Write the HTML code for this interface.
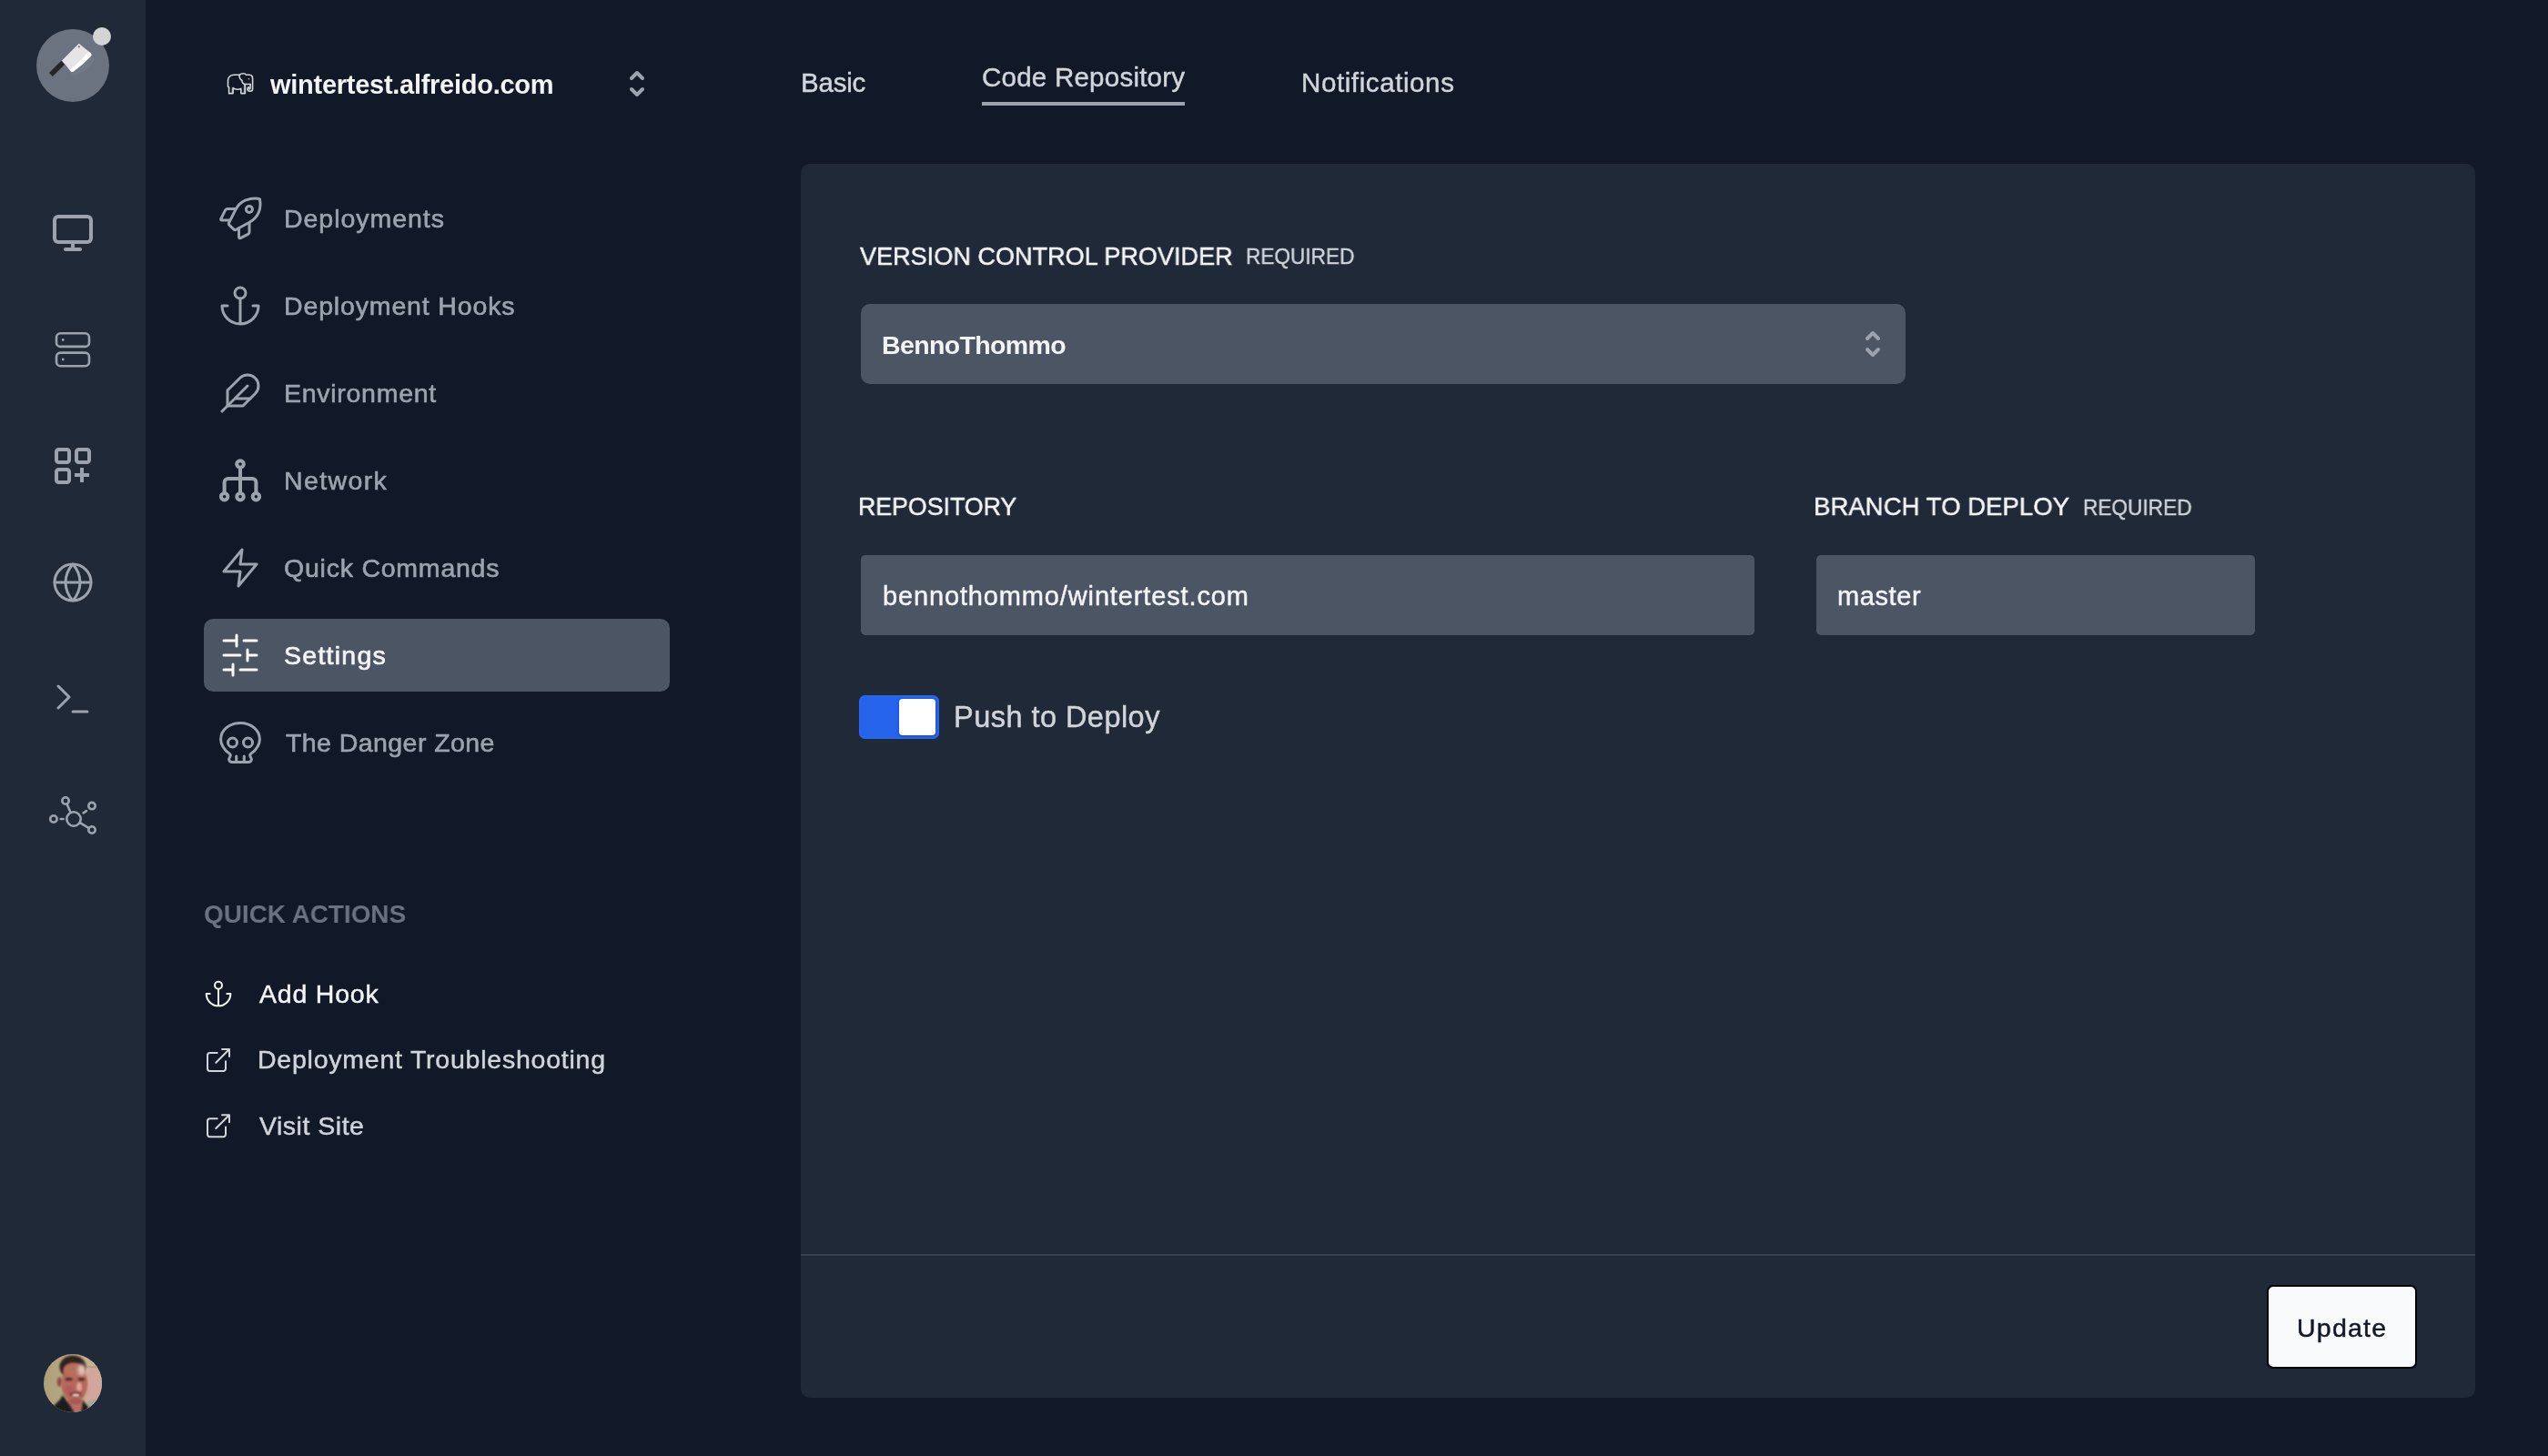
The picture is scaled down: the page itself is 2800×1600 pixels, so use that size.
<!DOCTYPE html>
<html lang="en">
<head>
<meta charset="utf-8">
<title>Settings - Code Repository</title>
<style>
  html, body { margin: 0; padding: 0; }
  body {
    width: 2800px; height: 1600px; overflow: hidden; position: relative;
    background: #111827;
    font-family: "Liberation Sans", sans-serif;
    color: #f3f4f6;
    -webkit-font-smoothing: antialiased;
  }
  .abs { position: absolute; }
  .t { position: absolute; white-space: nowrap; line-height: 1; margin: 0; padding: 0; will-change: transform; }
  #rail { left: 0; top: 0; width: 160px; height: 1600px; background: #1f2937; }
  #logo { left: 40px; top: 32px; width: 80px; height: 80px; border-radius: 50%; background: #6b7280; }
  #logodot { left: 102px; top: 30px; width: 20px; height: 20px; border-radius: 50%; background: #d4d4d4; }
  #navsel { left: 224px; top: 680px; width: 512px; height: 80px; border-radius: 10px; background: #4b5563; }
  #card { left: 880px; top: 180px; width: 1840px; height: 1356px; border-radius: 10px; background: #1f2937; }
  #divider { left: 880px; top: 1378px; width: 1840px; height: 2px; background: #374151; }
  #tabline { left: 1079px; top: 112px; width: 223px; height: 4px; background: #9ca3af; }
  .field { background: #4b5563; }
  #sel { left: 946px; top: 334px; width: 1148px; height: 88px; border-radius: 10px; }
  #repo { left: 946px; top: 610px; width: 982px; height: 88px; border-radius: 5px; }
  #branch { left: 1996px; top: 610px; width: 482px; height: 88px; border-radius: 5px; }
  #toggle { left: 944px; top: 764px; width: 88px; height: 48px; border-radius: 7px; background: #2563eb; box-shadow: inset 0 0 0 2px #2866ee; }
  #knob { left: 988px; top: 768px; width: 40px; height: 40px; border-radius: 4px; background: #ffffff; box-shadow: 0 1px 3px rgba(10,30,120,.45); }
  #btn { left: 2491px; top: 1412px; width: 161px; height: 88px; border-radius: 7px; background: #f9fafb; border: 2px solid #000; }
  .nav { font-size: 28px; color: #9ca3af; }
  .lab { font-size: 28px; color: #f3f4f6; }
  .req { font-size: 24px; color: #d1d5db; }
  .qa  { font-size: 28px; color: #d1d5db; }
  .tab { font-size: 30px; color: #d1d5db; }
</style>
</head>
<body>

<!-- left rail -->
<div id="rail" class="abs"></div>
<div id="logo" class="abs"></div>
<div id="logodot" class="abs"></div>

<!-- sidebar -->
<div id="navsel" class="abs"></div>
<div class="t" id="site" style="left:296.5px; top:78.6px; font-size:29.0px; letter-spacing:-0.27px; font-weight:bold;color:#f3f4f6;">wintertest.alfreido.com</div>

<div class="t" id="n1" style="left:312.0px; top:225.8px; font-size:28.5px; letter-spacing:0.96px; color:#9ca3af; -webkit-text-stroke:0.6px #9ca3af;">Deployments</div>
<div class="t" id="n2" style="left:312.0px; top:322.0px; font-size:28.5px; letter-spacing:0.85px; color:#9ca3af; -webkit-text-stroke:0.6px #9ca3af;">Deployment Hooks</div>
<div class="t" id="n3" style="left:312.0px; top:418.0px; font-size:28.5px; letter-spacing:0.72px; color:#9ca3af; -webkit-text-stroke:0.6px #9ca3af;">Environment</div>
<div class="t" id="n4" style="left:312.0px; top:513.9px; font-size:28.5px; letter-spacing:1.37px; color:#9ca3af; -webkit-text-stroke:0.6px #9ca3af;">Network</div>
<div class="t" id="n5" style="left:312.0px; top:609.9px; font-size:28.5px; letter-spacing:0.77px; color:#9ca3af; -webkit-text-stroke:0.6px #9ca3af;">Quick Commands</div>
<div class="t" id="n6" style="left:312.0px; top:705.9px; font-size:28.5px; letter-spacing:1.26px; color:#f3f4f6; -webkit-text-stroke:0.7px #f3f4f6;">Settings</div>
<div class="t" id="n7" style="left:314.0px; top:801.9px; font-size:28.5px; letter-spacing:0.43px; color:#9ca3af; -webkit-text-stroke:0.6px #9ca3af;">The Danger Zone</div>

<div class="t" id="qah" style="left:224.0px; top:990.1px; font-size:28.5px; letter-spacing:0.0px; font-weight:bold;color:#6b7280; transform-origin:0 0; transform:scaleX(0.9787);">QUICK ACTIONS</div>
<div class="t" id="q1" style="left:285.0px; top:1078.0px; font-size:28.5px; letter-spacing:0.8px; color:#f3f4f6; -webkit-text-stroke:0.45px #f3f4f6;">Add Hook</div>
<div class="t" id="q2" style="left:283.0px; top:1150.1px; font-size:28.5px; letter-spacing:0.77px; color:#d1d5db; -webkit-text-stroke:0.45px #d1d5db;">Deployment Troubleshooting</div>
<div class="t" id="q3" style="left:285.0px; top:1222.8px; font-size:28.5px; letter-spacing:0.51px; color:#d1d5db; -webkit-text-stroke:0.45px #d1d5db;">Visit Site</div>

<!-- tabs -->
<div class="t" id="tb1" style="left:879.5px; top:76.2px; font-size:29.5px; letter-spacing:-0.2px; color:#d1d5db; -webkit-text-stroke:0.45px #d1d5db;">Basic</div>
<div class="t" id="tb2" style="left:1079.0px; top:70.0px; font-size:29.5px; letter-spacing:0.24px; color:#d1d5db; -webkit-text-stroke:0.45px #d1d5db;">Code Repository</div>
<div class="t" id="tb3" style="left:1429.5px; top:76.2px; font-size:29.5px; letter-spacing:0.6px; color:#d1d5db; -webkit-text-stroke:0.45px #d1d5db;">Notifications</div>
<div id="tabline" class="abs"></div>

<!-- card -->
<div id="card" class="abs"></div>
<div id="divider" class="abs"></div>

<div class="t" id="l1" style="left:945.0px; top:266.5px; font-size:28.5px; letter-spacing:0.0px; color:#f3f4f6; transform-origin:0 0; transform:scaleX(0.9498); -webkit-text-stroke:0.5px #f3f4f6;">VERSION CONTROL PROVIDER</div>
<div class="t" id="r1" style="left:1368.5px; top:269.5px; font-size:24.5px; letter-spacing:0.0px; color:#d1d5db; transform-origin:0 0; transform:scaleX(0.9229); -webkit-text-stroke:0.4px #d1d5db;">REQUIRED</div>
<div id="sel" class="abs field"></div>
<div class="t" id="v1" style="left:969.0px; top:364.8px; font-size:28.5px; letter-spacing:-0.64px; font-weight:bold;color:#f3f4f6;">BennoThommo</div>

<div class="t" id="l2" style="left:943.0px; top:542.2px; font-size:28.5px; letter-spacing:0.0px; color:#f3f4f6; transform-origin:0 0; transform:scaleX(0.9377); -webkit-text-stroke:0.5px #f3f4f6;">REPOSITORY</div>
<div id="repo" class="abs field"></div>
<div class="t" id="v2" style="left:970.0px; top:640.9px; font-size:29.0px; letter-spacing:0.86px; color:#f3f4f6; -webkit-text-stroke:0.45px #f3f4f6;">bennothommo/wintertest.com</div>

<div class="t" id="l3" style="left:1993.0px; top:542.2px; font-size:28.5px; letter-spacing:0.0px; color:#f3f4f6; transform-origin:0 0; transform:scaleX(0.9681); -webkit-text-stroke:0.5px #f3f4f6;">BRANCH TO DEPLOY</div>
<div class="t" id="r3" style="left:2289.0px; top:545.6px; font-size:24.5px; letter-spacing:0.0px; color:#d1d5db; transform-origin:0 0; transform:scaleX(0.9245); -webkit-text-stroke:0.4px #d1d5db;">REQUIRED</div>
<div id="branch" class="abs field"></div>
<div class="t" id="v3" style="left:2019.0px; top:640.9px; font-size:29.0px; letter-spacing:0.6px; color:#f3f4f6; -webkit-text-stroke:0.45px #f3f4f6;">master</div>

<div id="toggle" class="abs"></div>
<div id="knob" class="abs"></div>
<div class="t" id="ptd" style="left:1047.5px; top:772.2px; font-size:32.5px; letter-spacing:0.46px; color:#d1d5db; -webkit-text-stroke:0.45px #d1d5db;">Push to Deploy</div>

<div id="btn" class="abs"></div>
<div class="t" id="upd" style="left:2524.0px; top:1444.5px; font-size:28.5px; letter-spacing:1.24px; color:#111827; -webkit-text-stroke:0.45px #111827;">Update</div>


<!-- avatar (abstract approximation of profile photo) -->
<svg class="abs" style="left:48px; top:1488px;" width="64" height="64" viewBox="48 1488 64 64">
  <defs>
    <clipPath id="avc"><circle cx="80" cy="1520" r="32"/></clipPath>
    <filter id="b1" x="-30%" y="-30%" width="160%" height="160%"><feGaussianBlur stdDeviation="1.3"/></filter>
    <filter id="b3" x="-50%" y="-50%" width="200%" height="200%"><feGaussianBlur stdDeviation="2"/></filter>
    <filter id="b2" x="-30%" y="-30%" width="160%" height="160%"><feGaussianBlur stdDeviation="0.8"/></filter>
    <linearGradient id="bgl" x1="0" y1="0" x2="1" y2="0"><stop offset="0" stop-color="#ad9f78"/><stop offset="1" stop-color="#c7bb97"/></linearGradient>
  </defs>
  <g clip-path="url(#avc)">
    <rect x="48" y="1488" width="64" height="64" fill="url(#bgl)"/>
    <rect x="94" y="1488" width="20" height="16" fill="#c2b48c"/>
    <rect x="94.5" y="1502.5" width="20" height="50" fill="#d3a69b" filter="url(#b2)"/>
    <rect x="95" y="1501.5" width="18" height="1.6" fill="#b89a78"/>
    <ellipse cx="104" cy="1544" rx="9" ry="6" fill="#a7a8a1" filter="url(#b1)"/>
    <!-- hair -->
    <ellipse cx="80" cy="1502" rx="14.6" ry="12.5" fill="#33241e" filter="url(#b2)"/>
    <!-- ear -->
    <ellipse cx="65.5" cy="1518.5" rx="2.8" ry="5.2" fill="#8e4d42" filter="url(#b2)"/>
    <!-- neck -->
    <rect x="74" y="1538" width="18" height="16" fill="#b86e62" filter="url(#b2)"/>
    <!-- shirt -->
    <path d="M56 1548L66 1538L69 1533L76 1543L82 1553L50 1556Z" fill="#1d1d1a" filter="url(#b2)"/>
    <path d="M91 1539L97 1546L96 1552L88 1556L90 1548Z" fill="#1d1d1a" filter="url(#b2)"/>
    <!-- face -->
    <ellipse cx="81.8" cy="1520.5" rx="14.4" ry="21" fill="#b4685b" filter="url(#b2)"/>
    <ellipse cx="81" cy="1505.5" rx="11.5" ry="8" fill="#b86e5c" filter="url(#b1)"/>
    <ellipse cx="90" cy="1505.5" rx="4.4" ry="6.2" fill="#f0d6cc" filter="url(#b3)" opacity=".85"/>
    <ellipse cx="87" cy="1524" rx="3" ry="5" fill="#e3a595" filter="url(#b1)"/>
    <ellipse cx="76" cy="1527" rx="4.5" ry="4" fill="#b25562" filter="url(#b1)" opacity=".7"/>
    <!-- eyes / brows -->
    <ellipse cx="75.7" cy="1515.6" rx="4.2" ry="1.7" fill="#4a2622" filter="url(#b2)"/>
    <ellipse cx="89.5" cy="1515.6" rx="3.8" ry="1.7" fill="#4a2622" filter="url(#b2)"/>
    <!-- mouth -->
    <ellipse cx="83" cy="1532.4" rx="6.6" ry="2.6" fill="#7a2f2c" filter="url(#b2)"/>
    <ellipse cx="83.4" cy="1532.9" rx="4.2" ry="1.5" fill="#f1e6e0" filter="url(#b2)"/>
    <ellipse cx="83" cy="1540" rx="7" ry="3" fill="#a8584e" filter="url(#b1)"/>
  </g>
</svg>

<!-- ICONS -->
<svg id="icons" class="abs" style="left:0; top:0;" width="2800" height="1600" viewBox="0 0 2800 1600" fill="none" stroke-linecap="round" stroke-linejoin="round">

<!-- logo cleaver -->
<g stroke="none">
  <ellipse cx="91" cy="72.5" rx="15" ry="5.5" transform="rotate(-36 91 72.5)" fill="#7a8190" opacity=".45"/>
  <polygon points="54.0,79.9 57.8,84.0 71.0,70.9 67.3,66.7" fill="#262626"/>
  <path d="M68.0 66.6 L86.0 48.4 Q86.8 47.7 87.6 48.4 L98.9 57.7 Q101.7 59.9 99.6 62 Q91.8 70.6 81.4 77.9 Q79.3 79.6 77.6 78.2 Z" fill="#e5e5e7"/>
  <path d="M97.3 56.4 L98.9 57.7 Q101.7 59.9 99.6 62 Q91.8 70.6 81.4 77.9 Q79.3 79.6 77.6 78.2 L76.6 76.8 Q88 68 97.3 56.4Z" fill="#ffffff"/>
  <circle cx="86.8" cy="51.3" r="1.1" fill="#6b7280"/>
</g>

<!-- rail icons (gray-400) -->
<g stroke="#9ca3af">
  <!-- monitor -->
  <g stroke-width="4">
    <rect x="60" y="238" width="40" height="28" rx="4"/>
    <path d="M80 266V274M72 274H88"/>
  </g>
  <!-- server -->
  <g stroke-width="2.6">
    <rect x="62" y="366.3" width="36" height="14.6" rx="4.5"/>
    <rect x="62" y="387.6" width="36" height="14.6" rx="4.5"/>
    <circle cx="69.2" cy="373.5" r="1.4" fill="#9ca3af" stroke="none"/>
    <circle cx="69.2" cy="395" r="1.4" fill="#9ca3af" stroke="none"/>
  </g>
  <!-- squares plus -->
  <g stroke-width="4">
    <rect x="62" y="494" width="14" height="14" rx="2.5"/>
    <rect x="84" y="494" width="14" height="14" rx="2.5"/>
    <rect x="62" y="516" width="14" height="14" rx="2.5"/>
    <path d="M82 522H98M90 514V530" stroke-linecap="butt"/>
  </g>
  <!-- globe -->
  <g stroke-width="3">
    <circle cx="80" cy="640" r="20"/>
    <path d="M60 640H100"/>
    <path d="M80 620a30.6 30.6 0 0 1 8 20 30.6 30.6 0 0 1-8 20 30.6 30.6 0 0 1-8-20 30.6 30.6 0 0 1 8-20z"/>
  </g>
  <!-- terminal -->
  <g stroke-width="3">
    <path d="M64 754L76 766L64 778M80 782H96"/>
  </g>
  <!-- hub -->
  <g stroke-width="2.6">
    <circle cx="81" cy="900" r="7.7"/>
    <circle cx="72" cy="880" r="3.7"/>
    <circle cx="101" cy="885.6" r="3.7"/>
    <circle cx="58.9" cy="900" r="3.7"/>
    <circle cx="101" cy="912" r="3.7"/>
    <path d="M73.7 883.8L77.3 892.2M91.6 893.4L95 891.2M66.6 900H69.6M88 904.2L97.4 909.8"/>
  </g>
</g>
<!-- elephant -->
<g stroke="#d1d5db" stroke-width="1.6">
  <path d="M251.6 102.6V95.7L250.5 95.3V88.5C250.5 84.9 253.5 82.2 257.1 82.2H263.4C264.2 81.2 265.8 80.8 267.4 80.8C268.8 80.8 270 81.4 270.4 82.3H274.1C276.2 82.4 277.6 84.2 277.6 86.4V98.1C277.6 99.6 276.3 100.3 274.8 100.3C273 100.3 271.9 99.2 271.9 97.6C271.9 96.6 272.5 95.9 273.5 95.8"/>
  <path d="M275.1 92.5V96.8C275.1 97.6 274.6 97.9 274.2 97.9C273.6 97.9 273.3 97.3 273.3 96.2"/>
  <path d="M268.8 92.5H275.1"/>
  <path d="M263.4 82.2C262.9 83.2 263 84.6 263.4 85.6C263.9 86.8 264.8 87.8 266 88.5C266 89.2 266 89.6 266.2 90.1C266.6 91 267 91.5 267.6 91.9C268 92.2 268.4 92.4 268.8 92.5"/>
  <path d="M269.4 92.7V102.6H264.8V97.4C262.6 98.6 258.3 98.6 256.1 96.6V102.6H251.6"/>
  <path d="M268.3 93.2V102.2M255.2 97V102.2" stroke-width="1" opacity=".8"/>
  <circle cx="273.5" cy="86.7" r="0.75" fill="#d1d5db" stroke="none"/>
</g>

<!-- selector chevrons -->
<g stroke="#9ca3af" stroke-width="4">
  <path d="M694 86L700 80L706 86M694 98L700 104L706 98"/>
  <path d="M2052 372L2058 366L2064 372M2052 384L2058 390L2064 384"/>
</g>

<!-- nav icons -->
<g stroke="#9ca3af" stroke-width="3">
  <!-- rocket -->
  <path d="M285.4 218.6C281.5 217.8 275.5 218 269.5 220.2C264.8 222.2 261.6 225.6 259.4 229.4L251.7 244.7C251.1 245.9 251.4 246.8 252.3 247.6L257.1 252.2C257.7 252.8 258.4 252.9 259.2 252.5L274.2 244.3C278.8 241.6 282.4 237.6 284.2 233.6C286 229.4 286.4 223.4 285.4 218.6Z"/>
  <path d="M258.9 229.5H250.3C248.8 229.5 247.9 230.2 247.2 231.7L243 240.1C242.3 241.3 242.8 241.9 243.8 241.9H252.4"/>
  <path d="M262.5 250.8V260.6C262.5 261.8 263.3 262.1 264.3 261.6L272.6 257.3C273.6 256.8 274 256.1 274 255.2V244.7"/>
  <circle cx="273.9" cy="230" r="3.5"/>
  <!-- anchor -->
  <circle cx="264" cy="322" r="6"/>
  <path d="M264 356V328M250 336H244a20 20 0 0 0 40 0H278"/>
  <!-- feather -->
  <path d="M280.48 432.48a12 12 0 0 0-16.98-16.98L250 429V446H267z"/>
  <path d="M272 424L244 452M275 438H258"/>
  <!-- zap -->
  <path d="M266 604L246 628H264L262 644L282 620H264Z"/>
</g>
<!-- network -->
<g stroke="#9ca3af" stroke-width="4">
  <circle cx="264" cy="510" r="3.8"/>
  <circle cx="246.6" cy="545.8" r="3.7"/>
  <circle cx="264" cy="545.8" r="3.7"/>
  <circle cx="281.4" cy="545.8" r="3.7"/>
  <path d="M264 514V542M246.6 542V530A4 4 0 0 1 250.6 526H277.4A4 4 0 0 1 281.4 530V542"/>
</g>
<!-- sliders (selected, white) -->
<g stroke="#f9fafb" stroke-width="3">
  <path d="M246 704H260M268 704H282M260 698V710M246 720H264M272 720H282M272 714V726M246 736H256M264 736H282M256 730V742"/>
</g>
<!-- skull -->
<g stroke="#9ca3af" stroke-width="3">
  <path d="M252.4 828.4C246 823.6 242.6 819.4 242.6 812.4C242.6 802.4 252 794.5 264 794.5C276 794.5 285.4 802.4 285.4 812.4C285.4 819.4 282 823.6 275.6 828.4C274.4 829.4 274.6 830.6 275.4 832C276.4 833.6 276.6 834.4 276.2 835.4C275.6 836.8 274.6 837.5 273 837.5H255C253.4 837.5 252.4 836.8 251.8 835.4C251.4 834.4 251.6 833.6 252.6 832C253.4 830.6 253.6 829.4 252.4 828.4Z"/>
  <circle cx="255.5" cy="816" r="5"/>
  <circle cx="272.5" cy="816" r="5"/>
  <path d="M259.7 831V837M268.3 831V837"/>
</g>

<!-- quick action icons -->
<g stroke="#f3f4f6" stroke-width="2">
  <circle cx="240" cy="1082.7" r="4"/>
  <path d="M240 1105.3V1086.7M230.7 1092H226.7a13.33 13.33 0 0 0 26.66 0H249.3"/>
</g>
<g stroke="#d1d5db" stroke-width="2">
  <path d="M248 1166.3V1174.3a2.67 2.67 0 0 1-2.67 2.67H230.67a2.67 2.67 0 0 1-2.67-2.67V1159.67a2.67 2.67 0 0 1 2.67-2.67H238.67M244 1153H252V1161M237.3 1167.7L252 1153"/>
  <path d="M248 1238.6V1246.6a2.67 2.67 0 0 1-2.67 2.67H230.67a2.67 2.67 0 0 1-2.67-2.67V1231.97a2.67 2.67 0 0 1 2.67-2.67H238.67M244 1225.3H252V1233.3M237.3 1240L252 1225.3"/>
</g>

</svg>

</body>
</html>
